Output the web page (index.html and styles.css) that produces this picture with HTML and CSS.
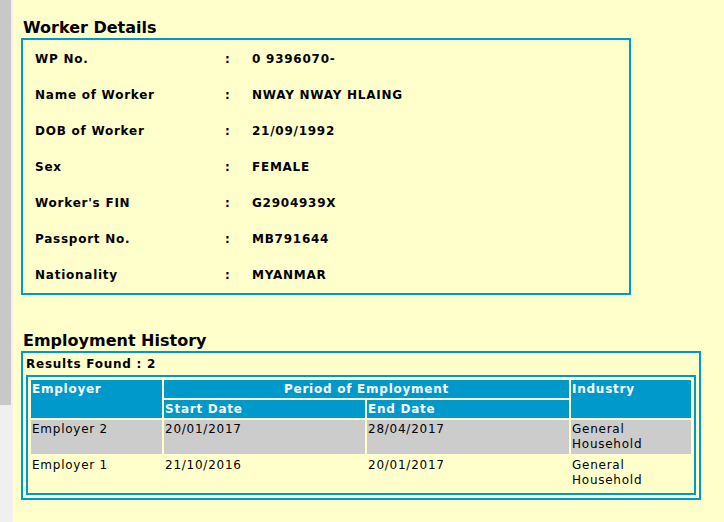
FILE: index.html
```html
<!DOCTYPE html>
<html lang="en">
<head>
  <meta charset="UTF-8" />
  <title>Worker Details</title>
  <link rel="stylesheet" href="styles.css">
</head>
<body>

  <div class="scroll"><div class="scroll-thumb"></div></div>

  <div class="content">
    <!-- Worker Details -->
    <h2 class="section-title">Worker Details</h2>
    <div class="details">
      <div class="detail-row"><span>WP No.</span><span>:</span><span>0 9396070-</span></div>
      <div class="detail-row"><span>Name of Worker</span><span>:</span><span>NWAY NWAY HLAING</span></div>
      <div class="detail-row"><span>DOB of Worker</span><span>:</span><span>21/09/1992</span></div>
      <div class="detail-row"><span>Sex</span><span>:</span><span>FEMALE</span></div>
      <div class="detail-row"><span>Worker's FIN</span><span>:</span><span>G2904939X</span></div>
      <div class="detail-row"><span>Passport No.</span><span>:</span><span>MB791644</span></div>
      <div class="detail-row"><span>Nationality</span><span>:</span><span>MYANMAR</span></div>
    </div>

    <!-- Employment History -->
    <h2 class="section-title history-title">Employment History</h2>
    <div class="history">
      <div class="results">Results Found : 2</div>
      <table class="history-table">
        <colgroup>
          <col class="col-employer">
          <col class="col-date">
          <col class="col-date-end">
          <col class="col-industry">
        </colgroup>
        <tr>
          <th rowspan="2">Employer</th>
          <th colspan="2" class="period">Period of Employment</th>
          <th rowspan="2">Industry</th>
        </tr>
        <tr>
          <th>Start Date</th>
          <th>End Date</th>
        </tr>
        <tr class="shaded">
          <td>Employer 2</td>
          <td>20/01/2017</td>
          <td>28/04/2017</td>
          <td>General Household</td>
        </tr>
        <tr>
          <td>Employer 1</td>
          <td>21/10/2016</td>
          <td>20/01/2017</td>
          <td>General Household</td>
        </tr>
      </table>
    </div>
  </div>

</body>
</html>
```

FILE: styles.css
```css
body {
  margin: 0;
  min-height: 100vh;
  display: flex;
  background: #ffffcc;
  color: #000;
  font-family: "DejaVu Sans", Verdana, sans-serif;
  letter-spacing: 0.75px;
}

.scroll {
  flex: none;
  width: 13px;
  background: #f0f0f0;
}

.scroll-thumb {
  width: 11px;
  height: 405px;
  background: #c8c8c8;
}

.content {
  padding: 18px 0 0 8px;
}

.section-title {
  margin: 0;
  padding-left: 2px;
  font-size: 16px;
  line-height: 20px;
  font-weight: bold;
  letter-spacing: 0;
}

.history-title {
  margin-top: 36px;
}

.details {
  width: 610px;
  box-sizing: border-box;
  border: 2px solid #0099cc;
  padding: 1px 0 0 12px;
}

.detail-row {
  display: grid;
  grid-template-columns: 190px 27px 1fr;
  align-items: center;
  height: 36px;
  font-size: 12px;
  line-height: 16px;
  font-weight: bold;
}

.history {
  width: 680px;
  box-sizing: border-box;
  border: 2px solid #0099cc;
  padding: 3px;
}

.results {
  font-size: 12px;
  line-height: 16px;
  font-weight: bold;
  margin-bottom: 3px;
}

.history-table {
  width: 670px;
  table-layout: fixed;
  border: 2px solid #0099cc;
  border-spacing: 2px;
  padding: 1px;
  font-size: 12px;
  line-height: 15px;
}

.col-employer { width: 131px; }
.col-date { width: 201px; }
.col-date-end { width: 202px; }
.col-industry { width: 120px; }

.history-table th {
  background: #0099cc;
  color: #fff;
  font-weight: bold;
  text-align: left;
  vertical-align: top;
  padding: 2px 1px 1px;
}

.history-table th.period {
  text-align: center;
}

.history-table td {
  vertical-align: top;
  padding: 2px 1px;
}

.shaded td {
  background: #cccccc;
}
```
